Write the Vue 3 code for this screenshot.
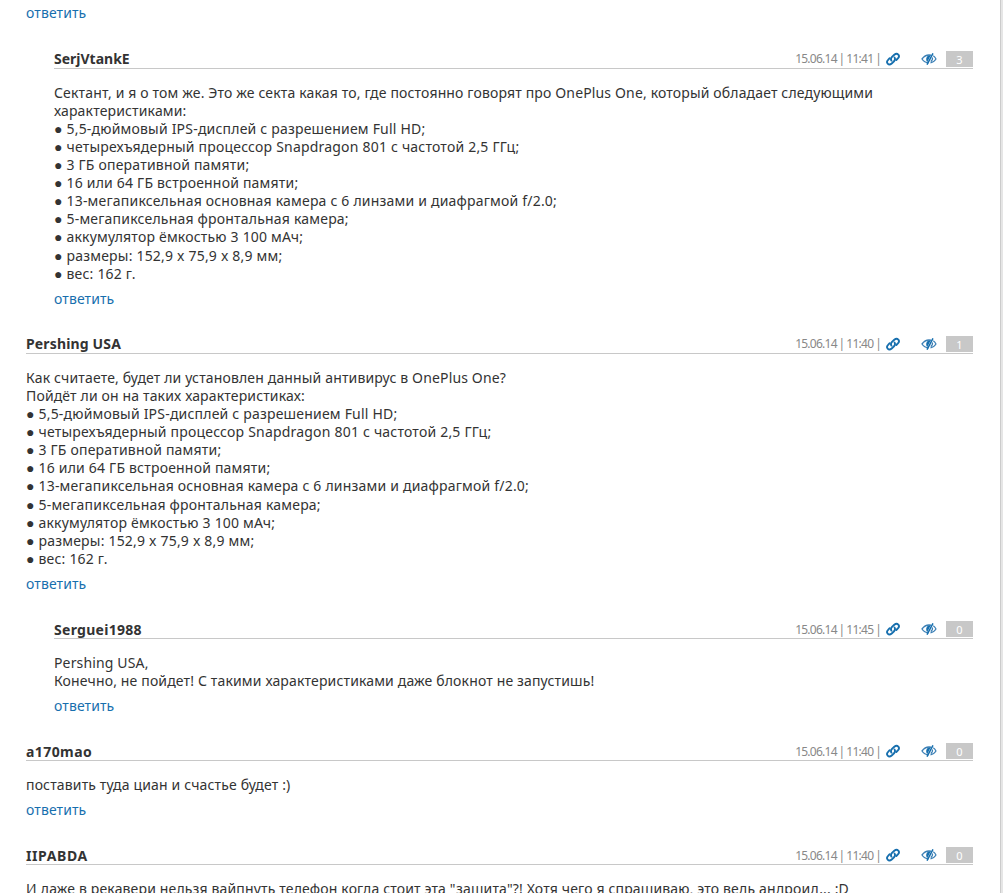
<template>
  <div class="page">
    <main class="comments">
      <a href="#" class="reply" @click.prevent>ответить</a>

      <article v-for="comment in comments" :key="comment.author" class="comment" :class="{ nested: comment.nested }">
        <header class="comment-header">
          <h3 class="author" :style="{ letterSpacing: comment.spacing + 'px' }">{{ comment.author }}</h3>
          <span class="date">15.06.14 | {{ comment.time }} |</span>
          <svg class="link-icon" viewBox="0 0 14 14" width="14" height="14">
            <g fill="none" stroke="#176fae" stroke-width="1.9" stroke-linecap="round">
              <path d="M5.400 8.600C4.600 7.200 5 6 6 4.900L8.300 2.700c1.300-1.100 3-1.200 4-.1s.7 2.600-.4 3.700L10.300 8" />
              <path d="M8.600 5.600c.8 1.400.4 2.600-.6 3.700L5.700 11.500c-1.300 1.100-3 1.200-4 .1s-.7-2.600.4-3.700L3.700 6.200" />
            </g>
          </svg>
          <svg class="eye-icon" viewBox="0 0 16 12" width="16" height="12">
            <path d="M7.500 9.800C4.500 9.600 2.500 8.200 1 6c2-2.800 4.300-4 7-4l2 .2" fill="none" stroke="#3b7fb5" stroke-width="1.300" />
            <path d="M9.800 2.200C6 1.800 3.800 5.500 6.200 9.200z" fill="#176fae" />
            <path d="M12 0.300L6 11.700" stroke="#176fae" stroke-width="1.500" />
            <path d="M12.300 2.800C13.500 3.600 14.300 4.600 15 6c-1.200 2-2.900 3.400-5.500 3.800M11.300 4.500c.6 1.600-.1 3-1.600 4.100" fill="none" stroke="#3b7fb5" stroke-width="1.200" />
          </svg>
          <span class="votes">{{ comment.votes }}</span>
        </header>
        <div class="text">
          <div v-for="line in comment.lines" :key="line" :class="{ spec: line.startsWith('●') }">{{ line }}</div>
        </div>
        <a href="#" class="reply" @click.prevent>ответить</a>
      </article>
    </main>
  </div>
</template>

<script setup>
// Phone specs quoted in two of the comments
const specs = [
  '● 5,5-дюймовый IPS-дисплей с разрешением Full HD;',
  '● четырехъядерный процессор Snapdragon 801 с частотой 2,5 ГГц;',
  '● 3 ГБ оперативной памяти;',
  '● 16 или 64 ГБ встроенной памяти;',
  '● 13-мегапиксельная основная камера с 6 линзами и диафрагмой f/2.0;',
  '● 5-мегапиксельная фронтальная камера;',
  '● аккумулятор ёмкостью 3 100 мАч;',
  '● размеры: 152,9 x 75,9 x 8,9 мм;',
  '● вес: 162 г.',
];

const comments = [
  {
    author: 'SerjVtankE',
    spacing: 0,
    time: '11:41',
    votes: 3,
    nested: true,
    lines: [
      'Сектант, и я о том же. Это же секта какая то, где постоянно говорят про OnePlus One, который обладает следующими',
      'характеристиками:',
      ...specs,
    ],
  },
  {
    author: 'Pershing USA',
    spacing: 0.15,
    time: '11:40',
    votes: 1,
    lines: [
      'Как считаете, будет ли установлен данный антивирус в OnePlus One?',
      'Пойдёт ли он на таких характеристиках:',
      ...specs,
    ],
  },
  {
    author: 'Serguei1988',
    spacing: 0.28,
    time: '11:45',
    votes: 0,
    nested: true,
    lines: ['Pershing USA,', 'Конечно, не пойдет! С такими характеристиками даже блокнот не запустишь!'],
  },
  {
    author: 'a170mao',
    spacing: 0.42,
    time: '11:40',
    votes: 0,
    lines: ['поставить туда циан и счастье будет :)'],
  },
  {
    author: 'IIPABDA',
    spacing: 0.6,
    time: '11:40',
    votes: 0,
    lines: ['И даже в рекавери нельзя вайпнуть телефон когда стоит эта "защита"?! Хотя чего я спрашиваю, это ведь андроид... :D'],
  },
];
</script>

<style>
body {
  margin: 0;
  background: #fff;
}
</style>

<style scoped>
.page {
  box-sizing: border-box;
  height: 893px;
  overflow: hidden;
  border-right: 2px solid #e6e6e6;
  box-shadow: inset -1px 0 #ccc;
  font-family: "Noto Sans", sans-serif;
  font-size: 14px;
  line-height: 18.0625px;
  color: #333;
}

.comments {
  padding: 4px 28px 0 26px;
}

.reply {
  display: block;
  width: max-content;
  height: 18px;
  color: #176fae;
  letter-spacing: 0.1px;
  text-decoration: none;
}

.comment {
  margin-top: 26px;
}

.reply + .comment:first-of-type {
  margin-top: 27px;
}

.comment.nested {
  margin-left: 28px;
}

.comment-header {
  display: flex;
  align-items: center;
  box-sizing: border-box;
  height: 20px;
  border-bottom: 1px solid #c8c8c8;
  line-height: 18px;
}

.author {
  flex: 1;
  margin: 0;
  padding-top: 1.6px;
  font-size: 14px;
  font-weight: 700;
}

.date {
  padding-top: 1.6px;
  font-size: 12px;
  letter-spacing: -0.75px;
  word-spacing: -0.5px;
  color: #888;
}

.link-icon {
  margin-left: 5px;
}

.eye-icon {
  margin-top: 1px;
  margin-left: 21px;
}

.votes {
  align-self: flex-end;
  width: 27px;
  height: 16px;
  margin-bottom: 1px;
  margin-left: 9px;
  background: #c8c8c8;
  color: #fff;
  font-size: 11px;
  line-height: 18px;
  text-align: center;
}

.text {
  margin-top: 14.97px;
  margin-bottom: 7px;
  letter-spacing: 0.15px;
  white-space: nowrap;
}

.spec {
  letter-spacing: 0.2px;
}

.spec:last-child {
  padding-bottom: 0.47px;
}
</style>
